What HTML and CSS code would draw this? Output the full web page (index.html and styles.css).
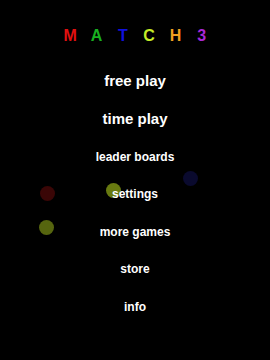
FILE: index.html
```html
<!DOCTYPE html>
<html>
    <head>
        <title>Match 3</title>
        <link rel="stylesheet" href="styles.css">
    </head>
    <body>
        <div class="screen">
            <h1 class="title">
                <span class="red">M</span>
                <span class="green">A</span>
                <span class="blue">T</span>
                <span class="lime">C</span>
                <span class="orange">H</span>
                <span class="purple">3</span>
            </h1>

            <ul class="menu">
                <li class="big">free play</li>
                <li class="big">time play</li>
                <li>leader boards</li>
                <li>settings</li>
                <li>more games</li>
                <li>store</li>
                <li>info</li>
            </ul>

            <div class="dot dot-red" style="left: 40px; top: 186px;"></div>
            <div class="dot dot-olive" style="left: 39px; top: 220px;"></div>
            <div class="dot dot-olive light" style="left: 106px; top: 183px;"></div>
            <div class="dot dot-blue" style="left: 183px; top: 171px;"></div>
        </div>
    </body>
</html>
```

FILE: styles.css
```css
body {
    margin: 0;
    background-color: #000;
}
.screen {
    position: relative;
    width: 270px;
    height: 360px;
    padding-top: 24px;
    box-sizing: border-box;
    font-family: 'Liberation Sans', Arial, sans-serif;
    font-weight: 700;
    overflow: hidden;
}
.title {
    display: flex;
    justify-content: center;
    margin: 0;
    padding-left: 2px;
    font-size: 16px;
    line-height: 24px;
}
.title span {
    width: 26.3px;
    text-align: center;
}
.red { color: #e01010; }
.green { color: #18b020; }
.blue { color: #1010dd; }
.lime { color: #c4ec28; }
.orange { color: #f0a020; }
.purple { color: #a828d8; }

.menu {
    list-style: none;
    margin: 14px 0 0 0;
    padding: 0;
}
.menu li {
    position: relative;
    z-index: 1;
    height: 37.5px;
    box-sizing: border-box;
    padding-top: 1.5px;
    line-height: 36px;
    text-align: center;
    color: #fff;
    font-size: 12px;
}
.menu li.big {
    padding-top: 0;
    line-height: 37.5px;
    font-size: 15px;
}

.dot {
    position: absolute;
    width: 15px;
    height: 15px;
    border-radius: 50%;
}
.dot-red { background-color: #3a0606; }
.dot-olive { background-color: #56650f; }
.dot-olive.light { background-color: #687a10; }
.dot-blue { background-color: #0a0a2e; }
```
